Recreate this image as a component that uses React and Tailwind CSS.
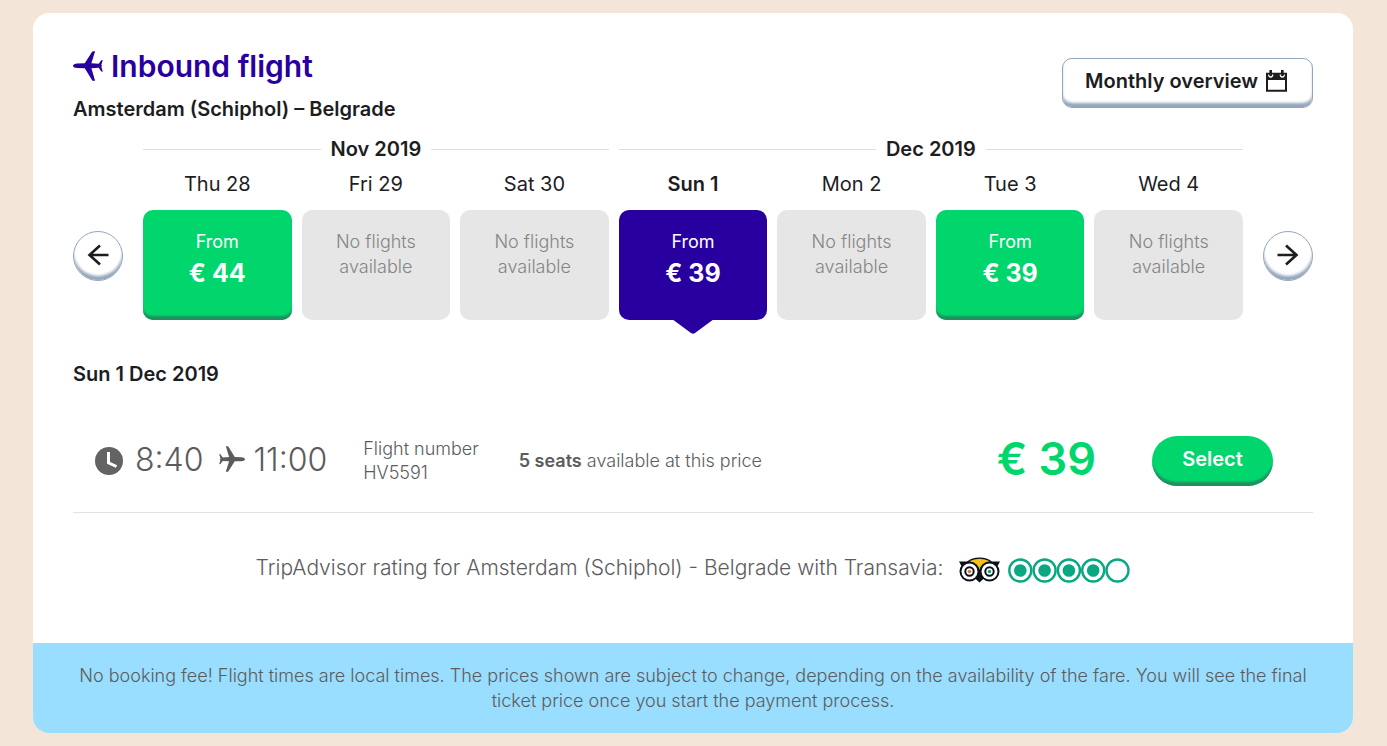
import React from 'react';
import clsx from 'clsx';

const months = [
    { label: 'Nov 2019', span: 'col-span-3' },
    { label: 'Dec 2019', span: 'col-span-4' }
];

const days = [
    { label: 'Thu 28', price: 44 },
    { label: 'Fri 29' },
    { label: 'Sat 30' },
    { label: 'Sun 1', price: 39, selected: true },
    { label: 'Mon 2' },
    { label: 'Tue 3', price: 39 },
    { label: 'Wed 4' }
];

const PlaneIcon = ({ className }) => (
    <svg viewBox="0 0 30 30" fill="currentColor" className={className} aria-hidden="true">
        <path d="M30 15.2C30 13.9 28 12.9 25.8 12.9L18.2 12.7L10.9 .8Q10.5 .2 9.8 .2H7.9L11.6 12.7L4.3 13.2L1.7 9.6L.2 9.3L1.7 14.4L.9 15.2L1.7 16L.2 21.1L1.7 20.8L4.3 17.2L11.6 17.7L7.9 29.8H9.8Q10.5 29.8 10.9 29.2L18.2 17.7L25.8 17.5C28 17.5 30 16.5 30 15.2Z" />
    </svg>
);

const CalendarIcon = () => (
    <svg viewBox="0 0 22 22" className="w-[22px] h-[22px]" aria-hidden="true">
        <path fill="#1d1d1f" fillRule="evenodd" d="M0 2.8H21V21.8H0ZM2 10V19.8H19V10Z" />
        <path fill="none" stroke="#fff" strokeWidth="1.3" d="M2.7 4.5Q2.7 7 4.7 7T6.7 4.5M14.3 4.5Q14.3 7 16.3 7T18.3 4.5" />
        <path fill="#1d1d1f" d="M3.4 0H6V5.5H3.4ZM15 0H17.6V5.5H15Z" />
    </svg>
);

const ArrowIcon = ({ className }) => (
    <svg viewBox="0 0 22 22" fill="none" stroke="#1d1d1f" strokeWidth="2.6" className={clsx('w-[22px] h-[22px]', className)} aria-hidden="true">
        <path d="M21.5 11H2.5M13 1.5L2.5 11L13 20.5" />
    </svg>
);

const ClockIcon = () => (
    <svg viewBox="0 0 28 28" className="w-7 h-7" aria-hidden="true">
        <circle cx="14" cy="14" r="14" fill="#636363" />
        <path d="M13.5 5V15.8L21.5 19.5" fill="none" stroke="#fff" strokeWidth="3" />
    </svg>
);

const OwlIcon = () => (
    <svg viewBox="0 0 41 26" className="w-[41px] h-[26px]" aria-hidden="true">
        <path d="M0 4.5H8Q13 .5 20.5 .5T33 4.5H41L38.5 9L20.5 25.5L2.5 9Z" fill="#0a1119" />
        <path d="M10 4.3Q20.5 -1 31 4.3Q22.5 6 20.5 13Q18.5 6 10 4.3Z" fill="#f5c115" />
        {[10.5, 30.5].map((cx, i) => (
            <g key={cx}>
                <circle cx={cx} cy="14.5" r="10" fill="#0a1119" />
                <circle cx={cx} cy="14.5" r="8" fill="#fff" />
                <circle cx={cx} cy="14.5" r="4.2" fill="#fff" stroke="#0a1119" strokeWidth="2" />
                <circle cx={cx} cy="14.5" r="1.7" fill={i === 0 ? '#ef6945' : '#00a680'} />
            </g>
        ))}
    </svg>
);

const RatingBubbles = ({ score }) => (
    <svg viewBox="0 0 122 25" className="w-[122px] h-[25px]" role="img" aria-label={`${score} of 5`}>
        {[0, 1, 2, 3, 4].map(i => (
            <g key={i}>
                <circle cx={12.3 + i * 24.3} cy="12.5" r="11" fill="#fff" stroke="#0aa783" strokeWidth="2.4" />
                {i < score && <circle cx={12.3 + i * 24.3} cy="12.5" r="6.3" fill="#0aa783" />}
            </g>
        ))}
    </svg>
);

const RoundButton = ({ label, children }) => (
    <button
        type="button"
        aria-label={label}
        className="shrink-0 w-[50px] h-[50px] mb-[39px] pb-0.5 rounded-full border border-[#93a4bb] bg-white flex items-center justify-center shadow-[inset_0_-5px_3px_-1px_#93a4bb]"
    >
        {children}
    </button>
);

const DayCard = ({ day }) => {
    if (!day.price) {
        return (
            <div className="h-[110px] pt-[19px] rounded-[10px] bg-[#e6e6e6] text-center text-lg leading-[25px] font-light text-[#858585]">
                No flights<br />available
            </div>
        );
    }

    return (
        <button
            type="button"
            aria-pressed={!!day.selected}
            className={clsx(
                'relative w-full h-[110px] pt-[19px] rounded-[10px] flex flex-col items-center text-white',
                day.selected ? 'bg-[#2900a0]' : 'bg-[#00d66c] shadow-[inset_0_-5px_2px_-1px_#1f9160]'
            )}
        >
            <span className="text-lg leading-[25px]">From</span>
            <span className="text-[25px] leading-[38px] font-bold">€ {day.price}</span>
            {day.selected && (
                <svg viewBox="0 0 42 15" className="absolute top-full left-1/2 -translate-x-1/2 -mt-px w-[42px] h-[15px]" aria-hidden="true">
                    <path d="M0 0H42L23 14Q21 15.5 19 14Z" fill="#2900a0" />
                </svg>
            )}
        </button>
    );
};

const App = () => {
    return (
        <div className="min-h-screen bg-[#f3e5d8] pl-[33px] pr-[34px] py-[13px] text-[#1d1d1f] font-['Inter','Liberation_Sans',sans-serif]">
            <main className="bg-white rounded-2xl overflow-hidden">
                <section className="px-10 pt-[33px]">
                    {/* Heading */}
                    <div className="flex justify-between items-start">
                        <div>
                            <h1 className="flex items-center gap-2 text-3xl leading-10 font-semibold text-[#2900a0]">
                                <PlaneIcon className="w-[30px] h-[30px] rotate-180" />
                                Inbound flight
                            </h1>
                            <h2 className="mt-2 text-xl leading-[30px] font-semibold">Amsterdam (Schiphol) – Belgrade</h2>
                        </div>
                        <button
                            type="button"
                            className="mt-3 h-[50px] pl-[22px] pr-6 rounded-[10px] border border-[#93a4bb] flex items-center gap-2 pb-1 text-xl font-semibold shadow-[inset_0_-5px_3px_-1px_#93a4bb]"
                        >
                            Monthly overview
                            <CalendarIcon />
                        </button>
                    </div>

                    {/* Day picker */}
                    <div className="mt-[10px] flex items-end gap-5">
                        <RoundButton label="Previous days"><ArrowIcon /></RoundButton>
                        <div className="flex-1">
                            <div className="grid grid-cols-7 gap-x-[10px]">
                                {months.map(m => (
                                    <div key={m.label} className={clsx('flex items-center gap-[10px] text-xl leading-[30px] font-semibold', m.span)}>
                                        <span className="flex-1 h-px bg-[#dedede]" />
                                        {m.label}
                                        <span className="flex-1 h-px bg-[#dedede]" />
                                    </div>
                                ))}
                            </div>
                            <div className="mt-[5px] grid grid-cols-7 gap-x-[10px]">
                                {days.map(day => (
                                    <div key={day.label}>
                                        <div className={clsx('mb-[11px] text-center text-xl leading-[30px]', day.selected && 'font-semibold')}>
                                            {day.label}
                                        </div>
                                        <DayCard day={day} />
                                    </div>
                                ))}
                            </div>
                        </div>
                        <RoundButton label="Next days"><ArrowIcon className="rotate-180" /></RoundButton>
                    </div>

                    {/* Selected flight */}
                    <h3 className="mt-[39px] text-xl leading-[30px] font-semibold">Sun 1 Dec 2019</h3>
                    <div className="mt-[47px] pl-[22px] pr-10 pb-[26px] border-b border-[#e3e3e3] flex items-center text-[#5c5c5c]">
                        <div className="flex items-center text-[32px] leading-10 font-light">
                            <ClockIcon />
                            <span className="ml-3 pb-0.5">8:40</span>
                            <PlaneIcon className="ml-4 mr-2 mb-1 w-[26px] h-[26px]" />
                            <span className="pb-0.5">11:00</span>
                        </div>
                        <div className="ml-9 text-lg leading-6 font-light">Flight number<br />HV5591</div>
                        <div className="ml-10 text-lg leading-6 font-light"><b className="font-semibold">5 seats</b> available at this price</div>
                        <div className="ml-auto pb-1 text-[45px] leading-[46px] font-semibold text-[#00d66c]">€ 39</div>
                        <button
                            type="button"
                            className="ml-14 w-[121px] h-[50px] pb-1 rounded-full bg-[#00d66c] text-white text-xl font-semibold shadow-[inset_0_-5px_2px_-1px_#1f9160]"
                        >
                            Select
                        </button>
                    </div>

                    {/* Rating */}
                    <div className="pt-10 pb-[60px] flex items-center justify-center text-[21px] leading-[30px] font-light text-[#5c5c5c]">
                        <span className="mr-4">TripAdvisor rating for Amsterdam (Schiphol) - Belgrade with Transavia:</span>
                        <span className="flex items-center gap-2 pt-1">
                            <OwlIcon />
                            <RatingBubbles score={4} />
                        </span>
                    </div>
                </section>

                <footer className="bg-[#99ddff] px-8 py-5 text-center text-lg leading-[25px] font-light text-[#5c5c5c]">
                    No booking fee! Flight times are local times. The prices shown are subject to change, depending on the availability of the fare. You will see the final ticket price once you start the payment process.
                </footer>
            </main>
        </div>
    );
};

export default App;
